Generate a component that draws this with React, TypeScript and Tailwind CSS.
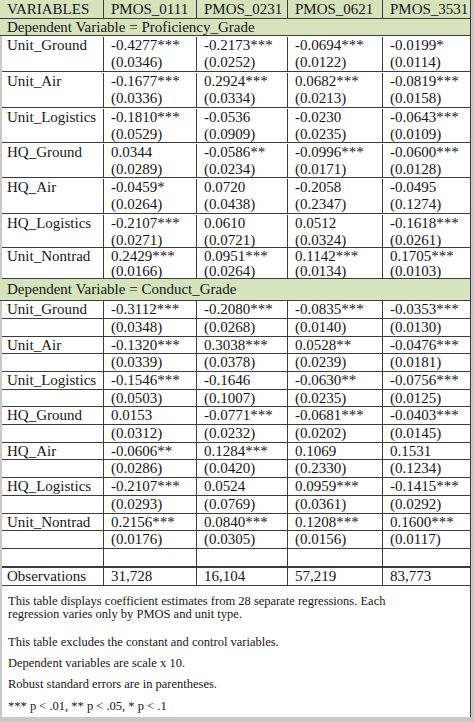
import React from "react";

const prof: [string, string[], string[]][] = [
  ["Unit_Ground", ["-0.4277***", "-0.2173***", "-0.0694***", "-0.0199*"], ["(0.0346)", "(0.0252)", "(0.0122)", "(0.0114)"]],
  ["Unit_Air", ["-0.1677***", "0.2924***", "0.0682***", "-0.0819***"], ["(0.0336)", "(0.0334)", "(0.0213)", "(0.0158)"]],
  ["Unit_Logistics", ["-0.1810***", "-0.0536", "-0.0230", "-0.0643***"], ["(0.0529)", "(0.0909)", "(0.0235)", "(0.0109)"]],
  ["HQ_Ground", ["0.0344", "-0.0586**", "-0.0996***", "-0.0600***"], ["(0.0289)", "(0.0234)", "(0.0171)", "(0.0128)"]],
  ["HQ_Air", ["-0.0459*", "0.0720", "-0.2058", "-0.0495"], ["(0.0264)", "(0.0438)", "(0.2347)", "(0.1274)"]],
  ["HQ_Logistics", ["-0.2107***", "0.0610", "0.0512", "-0.1618***"], ["(0.0271)", "(0.0721)", "(0.0324)", "(0.0261)"]],
  ["Unit_Nontrad", ["0.2429***", "0.0951***", "0.1142***", "0.1705***"], ["(0.0166)", "(0.0264)", "(0.0134)", "(0.0103)"]],
];

const profRowClass = [
  "h-[36px] leading-[17px] pt-[1px]",
  "h-[35.5px] leading-[17px] pt-[1px]",
  "h-[35.5px] leading-[17px] pt-[1px]",
  "h-[35px] leading-[17px] pt-[1px]",
  "h-[35.5px] leading-[17px] pt-[1px]",
  "h-[34.5px] leading-[17px] pt-[1px]",
  "h-[31.3px] leading-[15px] pt-[1px]",
];

const cond: [string, string[], string[]][] = [
  ["Unit_Ground", ["-0.3112***", "-0.2080***", "-0.0835***", "-0.0353***"], ["(0.0348)", "(0.0268)", "(0.0140)", "(0.0130)"]],
  ["Unit_Air", ["-0.1320***", "0.3038***", "0.0528**", "-0.0476***"], ["(0.0339)", "(0.0378)", "(0.0239)", "(0.0181)"]],
  ["Unit_Logistics", ["-0.1546***", "-0.1646", "-0.0630**", "-0.0756***"], ["(0.0503)", "(0.1007)", "(0.0235)", "(0.0125)"]],
  ["HQ_Ground", ["0.0153", "-0.0771***", "-0.0681***", "-0.0403***"], ["(0.0312)", "(0.0232)", "(0.0202)", "(0.0145)"]],
  ["HQ_Air", ["-0.0606**", "0.1284***", "0.1069", "0.1531"], ["(0.0286)", "(0.0420)", "(0.2330)", "(0.1234)"]],
  ["HQ_Logistics", ["-0.2107***", "0.0524", "0.0959***", "-0.1415***"], ["(0.0293)", "(0.0769)", "(0.0361)", "(0.0292)"]],
  ["Unit_Nontrad", ["0.2156***", "0.0840***", "0.1208***", "0.1600***"], ["(0.0176)", "(0.0305)", "(0.0156)", "(0.0117)"]],
];

const cell = "border-l border-[#3c3c3c] pl-[7px]";
const bodyGrid = "grid grid-cols-[101px_93px_91px_95px_1fr] border-b border-[#3c3c3c]";

export default function App() {
  return (
    <div className="w-[474px] h-[722px] bg-[#c8c8c8] flex flex-col text-[#161616] font-['Liberation_Serif','Times_New_Roman',serif] overflow-hidden">
      {/* header */}
      <div className="w-[471px] bg-white text-[15px] leading-[17px] border-r border-[#3c3c3c]">
        <div className="grid grid-cols-[103px_93px_91px_95px_1fr] h-[19px] bg-[#d6e3bc] border-b border-[#3c3c3c] items-center">
          <div className="pl-[7px]">VARIABLES</div>
          <div className={cell + " h-full flex items-center"}>PMOS_0111</div>
          <div className={cell + " h-full flex items-center"}>PMOS_0231</div>
          <div className={cell + " h-full flex items-center"}>PMOS_0621</div>
          <div className={cell + " h-full flex items-center"}>PMOS_3531</div>
        </div>
        <div className="h-[17px] bg-[#d6e3bc] border-b border-[#3c3c3c] pl-[7px] flex items-center">
          Dependent Variable = Proficiency_Grade
        </div>
      </div>
      {/* body */}
      <div className="ml-[2px] w-[469px] flex-1 mb-[5px] bg-white border-r border-[#3c3c3c] text-[15px] leading-[17px] flex flex-col">
        {prof.map(([name, c, s], r) => (
          <div key={"p" + name} className={bodyGrid + " " + profRowClass[r]}>
            <div className="pl-[5px]">{name}</div>
            {c.map((v, i) => (
              <div key={i} className={cell}>
                <div>{v}</div>
                <div>{s[i]}</div>
              </div>
            ))}
          </div>
        ))}
        <div className="h-[22px] -ml-[2px] bg-[#d6e3bc] border-b border-[#3c3c3c] pl-[7px] flex items-center">
          Dependent Variable = Conduct_Grade
        </div>
        {cond.map(([name, c, s]) => (
          <React.Fragment key={"c" + name}>
            <div className={bodyGrid + " h-[17.7px]"}>
              <div className="pl-[5px] flex items-center">{name}</div>
              {c.map((v, i) => (
                <div key={i} className={cell + " flex items-center"}>{v}</div>
              ))}
            </div>
            <div className={bodyGrid + " h-[17.7px]"}>
              <div></div>
              {s.map((v, i) => (
                <div key={i} className={cell + " flex items-center"}>{v}</div>
              ))}
            </div>
          </React.Fragment>
        ))}
        <div className={bodyGrid + " h-[19px] border-b-2"}>
          <div></div>
          <div className={cell}></div>
          <div className={cell}></div>
          <div className={cell}></div>
          <div className={cell}></div>
        </div>
        <div className={bodyGrid + " h-[18px]"}>
          <div className="pl-[5px] flex items-center">Observations</div>
          <div className={cell + " flex items-center"}>31,728</div>
          <div className={cell + " flex items-center"}>16,104</div>
          <div className={cell + " flex items-center"}>57,219</div>
          <div className={cell + " flex items-center"}>83,773</div>
        </div>
        {/* notes */}
        <div className="pl-[6px] pt-[9px] text-[12.5px] leading-[13px] flex flex-col">
          <p>This table displays coefficient estimates from 28 separate regressions. Each<br />regression varies only by PMOS and unit type.</p>
          <p className="mt-[15px]">This table excludes the constant and control variables.</p>
          <p className="mt-[8px]">Dependent variables are scale x 10.</p>
          <p className="mt-[8px]">Robust standard errors are in parentheses.</p>
          <p className="mt-[9px]">*** p &lt; .01, ** p &lt; .05, * p &lt; .1</p>
        </div>
      </div>
    </div>
  );
}
